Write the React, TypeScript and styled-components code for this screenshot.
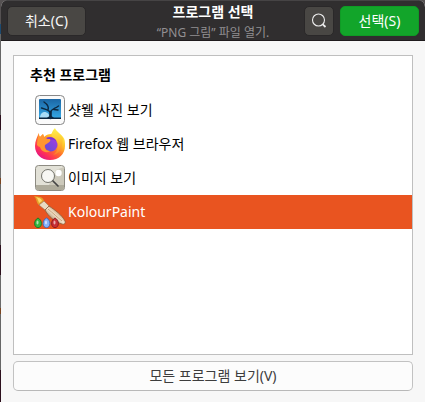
import React, { useState } from "react";
import styled, { createGlobalStyle, css } from "styled-components";

const Global = createGlobalStyle`
  * { box-sizing: border-box; }
  body {
    margin: 0;
    background: linear-gradient(
      #555152 24px, #1c4a70 24px 34px, #666 34px 115px,
      #2b0f1c 115px 130px, #707070 130px 178px, #7a4420 178px 184px,
      #666 184px 245px, #2b0f1c 245px 275px, #6a6a6a 275px 308px,
      #7a4420 308px 314px, #666 314px 370px, #2b0f1c 370px
    );
    font: 14px/20px "Noto Sans", "Noto Sans CJK KR", sans-serif;
    color: #000;
  }
  button { font: inherit; margin: 0; cursor: default; }
`;

const Dialog = styled.main`
  display: flex;
  flex-direction: column;
  min-height: 100vh;
  margin-left: 1px;
  background: #f7f7f7;
  border-radius: 7px 7px 0 0;
  overflow: hidden;
`;

const Header = styled.header`
  display: grid;
  grid-template-columns: 1fr auto 1fr;
  grid-template-rows: 39px;
  align-items: center;
  height: 41px;
  padding: 0 6px;
  background: #302e2f;
  border-top: 1px solid #464445;
  border-bottom: 1px solid #1f1b1d;
`;

const Titles = styled.div`
  align-self: start;
  text-align: center;
  white-space: nowrap;
`;

const Title = styled.h1`
  margin: 0;
  font-size: 14px;
  line-height: 22px;
  font-weight: 700;
  color: #fff;
`;

const Subtitle = styled.p`
  margin: 0;
  font-size: 12px;
  line-height: 20px;
  color: #929092;
`;

const Actions = styled.div<{ $end?: boolean }>`
  display: flex;
  align-items: center;
  justify-content: ${(p) => (p.$end ? "flex-end" : "flex-start")};
  gap: 6px;
`;

const HeaderButton = styled.button<{ $kind?: "primary" | "icon" }>`
  display: inline-flex;
  align-items: center;
  justify-content: center;
  width: ${(p) => (p.$kind === "icon" ? "30px" : "79px")};
  height: 30px;
  padding: 0;
  border: 1px solid #2a2829;
  border-radius: 5px;
  background: #494744;
  color: #f7f7f7;
  ${(p) =>
    p.$kind === "primary" &&
    css`
      border-color: #0f9b25;
      background: #12a52a;
      color: #fff;
    `}
`;

const Body = styled.div`
  display: flex;
  flex: 1;
  flex-direction: column;
  gap: 6px;
  padding: 14px 12px 11px;
`;

const AppPanel = styled.section`
  flex: 1;
  background: #fff;
  border: 1px solid #bfbfbf;
`;

const PanelHeading = styled.h2`
  margin: 0;
  padding: 9px 16px 8px;
  font-size: 14px;
  line-height: 20px;
  font-weight: 700;
`;

const AppRow = styled.button<{ $selected: boolean }>`
  display: flex;
  align-items: center;
  gap: 2px;
  width: 100%;
  height: 34px;
  padding: 0 20px;
  border: 0;
  text-align: left;
  background: ${(p) => (p.$selected ? "#e95420" : "transparent")};
  color: ${(p) => (p.$selected ? "#fff" : "#000")};
`;

const Icon = styled.svg`
  flex: none;
  width: 32px;
  height: 32px;
  overflow: visible;
`;

const ShowAll = styled.button`
  height: 30px;
  padding: 0 12px;
  border: 1px solid #c2c2c2;
  border-bottom-color: #b8b8b8;
  border-radius: 5px;
  background: #fcfcfc;
  color: #3d3d3d;
`;

const SearchIcon = () => (
  <svg width="16" height="16" viewBox="0 0 16 16" fill="none" stroke="#ededed" aria-hidden="true">
    <circle cx="7.5" cy="7" r="6" strokeWidth="1.1" />
    <path d="M11.8 11.3l2.7 2.7" strokeWidth="1.8" />
  </svg>
);

const ShotwellIcon = () => (
  <Icon viewBox="0 0 32 32" aria-hidden="true">
    <defs>
      <linearGradient id="sky" x1="0" y1="0" x2="0" y2="1">
        <stop offset="0" stopColor="#1b66a5" />
        <stop offset="1" stopColor="#36abe8" />
      </linearGradient>
    </defs>
    <rect x="1.5" y="1.5" width="29" height="29" rx="4" fill="#fafafa" stroke="#888" />
    <rect x="5" y="5" width="22" height="20" rx="1" fill="url(#sky)" />
    <path d="M6 24c0-8 9-8 10 0z" fill="#a9dcf6" />
    <g fill="none" stroke="#0c2740" strokeLinecap="round" strokeLinejoin="round">
      <path d="M16.5 24v-6" strokeWidth="2.6" />
      <path d="M16.5 19c-1-3-5-4-9-5M14 16c1-3-1-6-4-8M16.5 18c1-3 4-3 8-6M20 15.5l4 .5" strokeWidth="1.4" />
    </g>
    <path d="M5 25v-1.5h8l3-1.5h1l3 1.5h7V25z" fill="#0c2740" />
  </Icon>
);

const FirefoxIcon = () => (
  <Icon viewBox="0 0 32 32" aria-hidden="true">
    <defs>
      <linearGradient id="fire" x1=".85" y1=".1" x2=".2" y2=".95">
        <stop offset="0" stopColor="#fff04b" />
        <stop offset=".3" stopColor="#ffbd27" />
        <stop offset=".55" stopColor="#ff6d2c" />
        <stop offset=".8" stopColor="#ff3156" />
        <stop offset="1" stopColor="#e31587" />
      </linearGradient>
      <linearGradient id="tail" x1="0" y1="0" x2="0" y2="1">
        <stop offset="0" stopColor="#fff44f" />
        <stop offset=".5" stopColor="#ffc22e" />
        <stop offset="1" stopColor="#ff7a2c" />
      </linearGradient>
      <linearGradient id="globe" x1="1" y1="0" x2="0" y2="1">
        <stop offset="0" stopColor="#a53be0" />
        <stop offset="1" stopColor="#5b50d8" />
      </linearGradient>
    </defs>
    <path d="M5 5c0 2 0 3 1 4l3-3 1 3c2-2 4-3 7-3 2-1 3-3 4-5 2 3 6 5 8 8 2 2 2 5 2 9 0 8-6 14-15 14S1 26 1 18c0-5 2-9 4-13z" fill="url(#fire)" />
    <path d="M21 0c-3 3-4 6-3 9 3 1 6 4 6 8 0 5-2 8-5 10 5-1 9-5 9-10l1-7c-2-4-7-6-8-10z" fill="url(#tail)" />
    <circle cx="17" cy="17" r="6.5" fill="url(#globe)" />
    <path d="M12 10c4-2 9-1 11 4-3-3-5-3-8-2z" fill="#7c31d5" />
    <path d="M5 5c0 2 0 3 1 4l3-3 2 5h5c1 1 0 3-2 4l-3 2c-1 3 1 6 5 6-4 3-9 0-10-4-1 0-2-1-3-2 0-4 1-8 2-12z" fill="#ff9631" />
  </Icon>
);

const ViewerIcon = () => (
  <Icon viewBox="0 0 32 32" aria-hidden="true">
    <rect x="1.5" y="3.5" width="29" height="25" rx="3" fill="#e2e1d7" stroke="#8d8b82" />
    <path d="M15 23L22 8l8-3v18z" fill="#ccc9bb" />
    <path d="M2 23h28v3q0 2-2 2H4q-2 0-2-2z" fill="#aeab9b" />
    <circle cx="24.5" cy="11" r="3.2" fill="#fff" />
    <circle cx="14" cy="14" r="6.5" fill="#fafaf6" fillOpacity=".9" stroke="#66665f" strokeWidth=".9" />
    <path d="M19 19l5 5" stroke="#444" strokeWidth="1.7" strokeLinecap="round" />
  </Icon>
);

const KolourPaintIcon = () => (
  <Icon viewBox="0 0 32 32" aria-hidden="true">
    <defs>
      <linearGradient id="handle" x1="0" y1="1" x2="1" y2="0">
        <stop offset=".2" stopColor="#98704d" />
        <stop offset=".5" stopColor="#f4e4cc" />
        <stop offset=".8" stopColor="#ac7950" />
      </linearGradient>
    </defs>
    <path d="M0 0c4 1 9 0 10 5l-5 4C2 7 3 3 0 0z" fill="#e4a12a" />
    <path d="M2 1c3 1 5 1 6 4L5 7C4 4 4 3 2 1z" fill="#ffd86a" />
    <path d="M5 9l5-4 5 5-4 4z" fill="#e9dcc4" stroke="#997653" strokeWidth=".6" />
    <path d="M11 14l4-4c6 4 13 9 16 15 1 2-1 4-3 3-7-2-14-8-17-14z" fill="url(#handle)" stroke="#8a5d3a" strokeWidth=".8" />
    <path d="M14 13c5 4 10 9 14 12" stroke="#b88d66" strokeWidth=".8" fill="none" />
    {[
      { x: 4, dark: "#08751b", light: "#35b640" },
      { x: 12.5, dark: "#2e65bd", light: "#84b0fa" },
      { x: 21, dark: "#7c0f18", light: "#c92f34" },
    ].map((drop) => (
      <g key={drop.x} transform={`translate(${drop.x} 22)`}>
        <path d="M0 0c2 1 3.400 3 3.400 5.500 0 5.500-6.800 5.500-6.800 0C-3.400 3-2 1 0 0z" fill={drop.light} stroke={drop.dark} strokeWidth=".8" />
        <ellipse cx="-.5" cy="4.5" rx="1" ry="2" fill="#fff" opacity=".6" />
      </g>
    ))}
  </Icon>
);

const apps = [
  { name: "샷웰 사진 보기", Picture: ShotwellIcon },
  { name: "Firefox 웹 브라우저", Picture: FirefoxIcon },
  { name: "이미지 보기", Picture: ViewerIcon },
  { name: "KolourPaint", Picture: KolourPaintIcon },
];

export default function App() {
  const [selected, setSelected] = useState("KolourPaint");
  return (
    <>
      <Global />
      <Dialog>
        <Header>
          <Actions>
            <HeaderButton type="button">취소(C)</HeaderButton>
          </Actions>
          <Titles>
            <Title>프로그램 선택</Title>
            <Subtitle>“PNG 그림” 파일 열기.</Subtitle>
          </Titles>
          <Actions $end>
            <HeaderButton type="button" $kind="icon" aria-label="검색">
              <SearchIcon />
            </HeaderButton>
            <HeaderButton type="button" $kind="primary">선택(S)</HeaderButton>
          </Actions>
        </Header>
        <Body>
          <AppPanel aria-labelledby="recommended">
            <PanelHeading id="recommended">추천 프로그램</PanelHeading>
            {apps.map(({ name, Picture }) => (
              <AppRow
                key={name}
                type="button"
                $selected={name === selected}
                aria-pressed={name === selected}
                onClick={() => setSelected(name)}
              >
                <Picture />
                {name}
              </AppRow>
            ))}
          </AppPanel>
          <ShowAll type="button">모든 프로그램 보기(V)</ShowAll>
        </Body>
      </Dialog>
    </>
  );
}
